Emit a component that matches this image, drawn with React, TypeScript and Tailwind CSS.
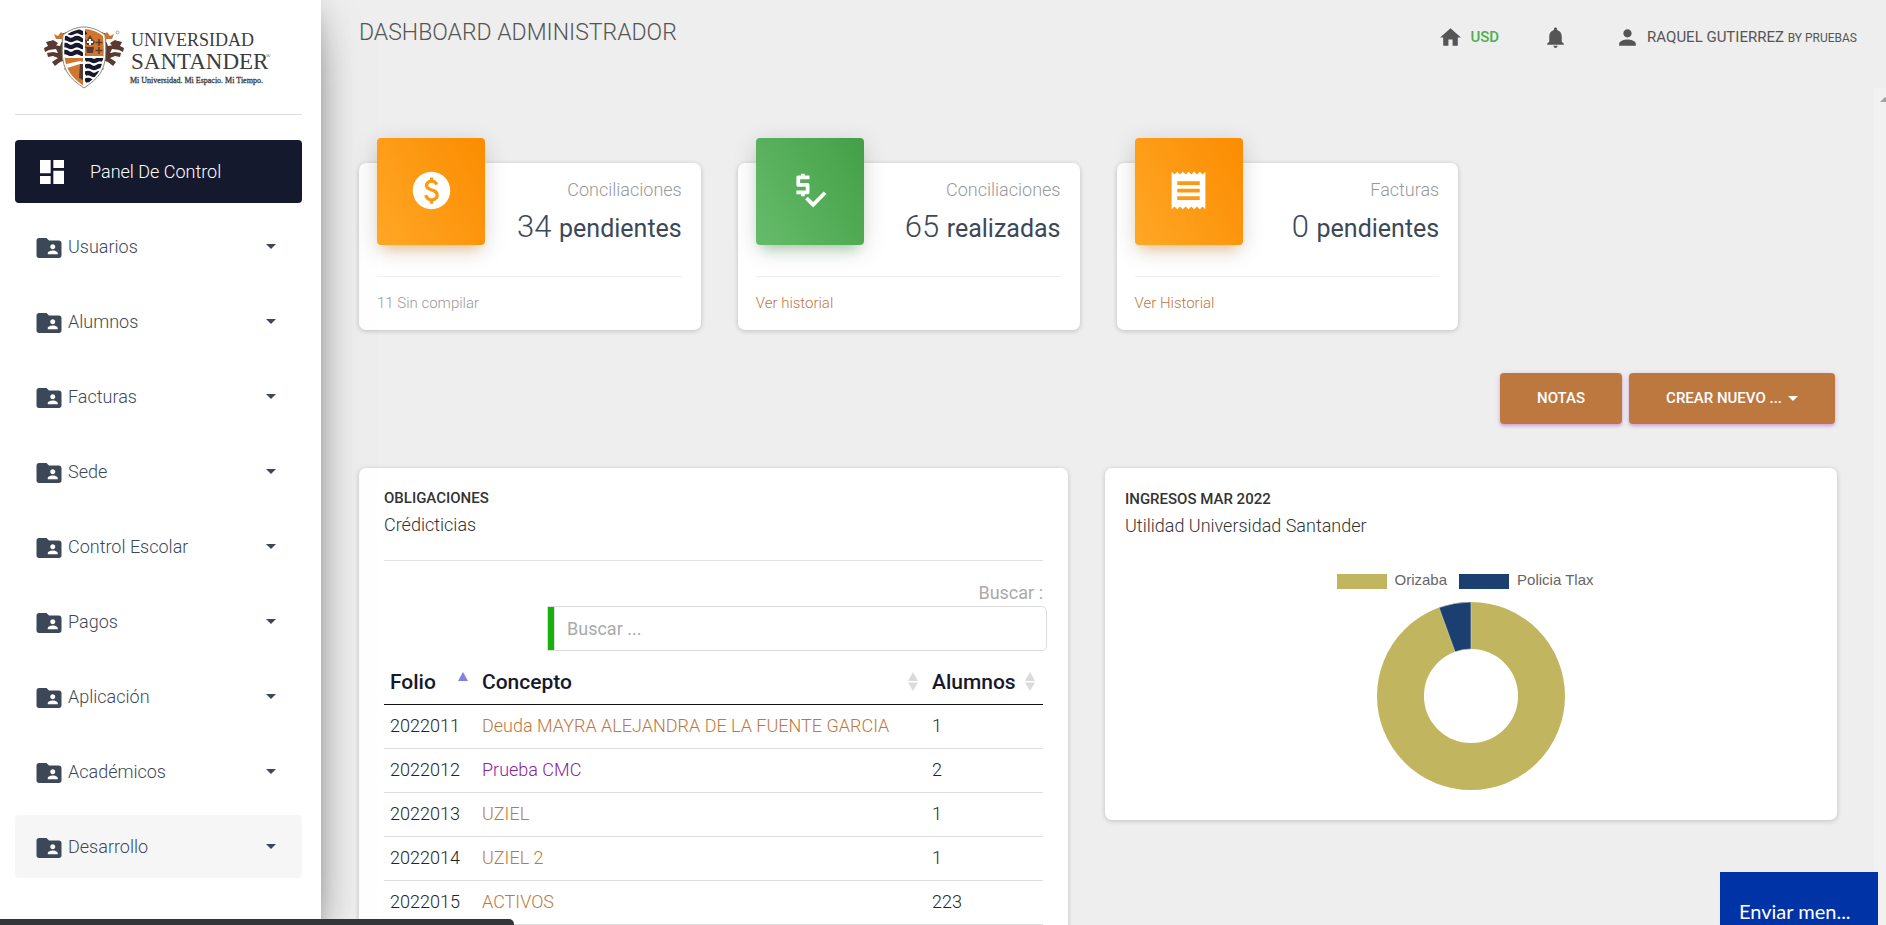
import type { ReactNode } from "react";
import {
  MdDashboard,
  MdFolderShared,
  MdHome,
  MdNotifications,
  MdPaid,
  MdPerson,
  MdPriceCheck,
  MdReceipt,
} from "react-icons/md";

const sections = [
  "Usuarios",
  "Alumnos",
  "Facturas",
  "Sede",
  "Control Escolar",
  "Pagos",
  "Aplicación",
  "Académicos",
  "Desarrollo",
];

const debts = [
  { folio: "2022011", name: "Deuda MAYRA ALEJANDRA DE LA FUENTE GARCIA", count: 1 },
  { folio: "2022012", name: "Prueba CMC", count: 2, visited: true },
  { folio: "2022013", name: "UZIEL", count: 1 },
  { folio: "2022014", name: "UZIEL 2", count: 1 },
  { folio: "2022015", name: "ACTIVOS", count: 223 },
];

const CARD = "rounded-[7px] bg-white shadow-[0_1px_5px_rgba(0,0,0,0.2)]";

function Caret() {
  return (
    <span className="inline-block border-x-[5px] border-t-[5px] border-x-transparent border-t-current" />
  );
}

function Lion() {
  return (
    <g fill="#5a3a30">
      <path d="M17 8 L23 6 L29 9 L31 17 L27 22 L30 30 L27 36 L31 44 L24 45 L20 43 L25 39 L22 34 L16 36 L11 40 L8 36 L14 32 L9 30 L4 31 L3 27 L9 26 L14 27 L12 23 L5 24 L1 26 L0 22 L4 20 L2 16 L6 15 L10 19 L16 20 L18 15 Z" />
      <path d="M4 16 L9 14 L14 17 L11 21 L5 19 Z" />
      <path d="M12 13 L10 8 L14 10 L17 6 L20 9 L26 7 L25 13 Z" fill="#c9742f" />
    </g>
  );
}

function Logo() {
  return (
    <svg viewBox="0 0 234 66" className="h-[66px] w-[234px]" role="img" aria-label="Universidad Santander">
      <Lion />
      <g transform="translate(80 0) scale(-1 1)">
        <Lion />
      </g>
      <path
        d="M40 1 C33 1 25 4 19 9 C18 24 17 35 23 46 C27 53 34 58 40 62 C46 58 53 53 57 46 C63 35 62 24 61 9 C55 4 47 1 40 1 Z"
        fill="#fff"
        stroke="#8b8b78"
      />
      <clipPath id="shield">
        <path d="M40 3 C33 3 26 6 21 10 C20 24 19 34 25 45 C28 51 34 56 40 60 C46 56 52 51 55 45 C61 34 60 24 59 10 C54 6 47 3 40 3 Z" />
      </clipPath>
      <g clipPath="url(#shield)">
        <path d="M40 0H62V31H40Z" fill="#d0772f" />
        <path d="M18 31H40V64H18Z" fill="#d0772f" />
        <g stroke="#16192e" strokeWidth="4.500" fill="none">
          <path d="M18 6 q3 -2 6 0 t6 0 t6 0 t6 0" />
          <path d="M18 13 q3 -2 6 0 t6 0 t6 0 t4 0" />
          <path d="M18 20 q3 -2 6 0 t6 0 t6 0 t4 0" />
          <path d="M18 27 q3 -2 6 0 t6 0 t6 0 t4 0" />
        </g>
        <g stroke="#16192e" strokeWidth="4.500" fill="none">
          <path d="M41 34 q3 -2 6 0 t6 0 t6 0" />
          <path d="M41 41 q3 -2 6 0 t6 0 t6 0" />
          <path d="M41 48 q3 -2 6 0 t6 0 t6 0" />
          <path d="M41 55 q3 -2 6 0 t6 0 t6 0" />
        </g>
        <path d="M39 0H41V64H39Z M18 30H62V32H18Z" fill="#fff" />
        <path d="M18 39 L36 35 L40 36 V38 L36 38 L20 43 Z" fill="#fff" />
        <path d="M36 38H39V54L35 52Z" fill="#5a3a30" />
        <path d="M43 14 L46 9 L49 14 L51 16 L49 19 H43 L41 16 Z M42 21H50L49 27H43Z" fill="#5a3a30" />
        <path d="M45 13H47V15H49V17H47V19H45V17H43V15H45Z" fill="#fff" />
        <path d="M55 13V20M51.500 16.500H58.500M55 21V28M51.500 24.500H58.500" stroke="#5a3a30" strokeWidth="1.500" />
      </g>
      <circle cx="73.500" cy="6.500" r="1.500" fill="none" stroke="#888" strokeWidth="0.700" />
      <g fontFamily="'Liberation Serif', serif" fill="#3c3c3c">
        <text x="87" y="20" fontSize="18">UNIVERSIDAD</text>
        <text x="87" y="43" fontSize="23">SANTANDER</text>
        <text x="222" y="32" fontSize="6">®</text>
        <text x="86" y="57" fontSize="8" stroke="#3c3c3c" strokeWidth="0.300">
          Mi Universidad. Mi Espacio. Mi Tiempo.
        </text>
      </g>
    </svg>
  );
}

function Sidebar() {
  return (
    <aside className="z-10 flex w-[321px] shrink-0 flex-col bg-white pr-[19px] pl-[15px] shadow-[0_20px_48px_-15px_rgba(0,0,0,0.56),0_5px_31px_0_rgba(0,0,0,0.12),0_10px_12px_-6px_rgba(0,0,0,0.2)]">
      <a href="#inicio" className="flex h-[115px] items-center border-b border-[#dedede] pt-1 pl-[29px]">
        <Logo />
      </a>
      <nav className="mt-[25px] flex flex-col gap-3">
        <a
          href="#panel"
          className="flex h-[63px] items-center rounded-[4px] bg-[#15192d] pl-[21px] text-[18px] font-light text-white"
        >
          <MdDashboard className="mr-[22px] size-8" />
          Panel De Control
        </a>
        {sections.map((name) => (
          <a
            key={name}
            href={"#" + name}
            className="flex h-[63px] items-center rounded-[4px] pr-[26px] pl-[19px] text-[18px] font-light text-[#3c4858] last:bg-[#f6f6f6]"
          >
            <MdFolderShared className="mt-0.5 mr-1 size-[30px]" />
            <span className="flex-1">{name}</span>
            <Caret />
          </a>
        ))}
      </nav>
    </aside>
  );
}

function TopBar() {
  return (
    <header className="flex h-[88px] shrink-0 justify-between pt-[15px] pr-[29px] pl-[38px] text-[#555]">
      <h1 className="text-[23px] leading-9 font-light">DASHBOARD ADMINISTRADOR</h1>
      <div className="flex h-11 items-center text-[15px]">
        <a href="#divisa" className="mr-[44px] flex items-center gap-[7px] font-medium text-[#4caf50]">
          <MdHome className="size-[25px] text-[#555]" />
          USD
        </a>
        <button type="button" aria-label="Notificaciones" className="mr-[47px]">
          <MdNotifications className="size-[25px]" />
        </button>
        <a href="#perfil" className="flex items-center gap-[7px]">
          <MdPerson className="size-[25px]" />
          <span>
            RAQUEL GUTIERREZ <small className="text-[12px]">BY PRUEBAS</small>
          </span>
        </a>
      </div>
    </header>
  );
}

const ORANGE =
  "bg-[linear-gradient(60deg,#ffa726,#fb8c00)] shadow-[0_5px_25px_0_rgba(0,0,0,0.14),0_9px_12px_-6px_rgba(255,152,0,0.4)]";
const GREEN =
  "bg-[linear-gradient(60deg,#66bb6a,#43a047)] shadow-[0_5px_25px_0_rgba(0,0,0,0.14),0_9px_12px_-6px_rgba(76,175,80,0.4)]";

type StatProps = {
  icon: ReactNode;
  tone: string;
  title: string;
  value: number;
  unit: string;
  footer: ReactNode;
};

function Stat({ icon, tone, title, value, unit, footer }: StatProps) {
  return (
    <article className={CARD + " pr-[19px] pl-[18px]"}>
      <div className="flex h-[113px] items-start justify-between">
        <div className={"-mt-[25px] grid h-[107px] w-[108px] place-items-center rounded-[4px] pb-0.5 text-white " + tone}>
          {icon}
        </div>
        <div className="pt-[13px] text-right font-light">
          <p className="text-[18px] leading-[27px] text-[#999]">{title}</p>
          <h3 className="mt-[3px] text-[31px] leading-[42px] text-[#3c4858]">
            {value} <small className="text-[25px] font-normal">{unit}</small>
          </h3>
        </div>
      </div>
      <div className="flex h-[54px] items-center border-t border-[#eee] text-[15px] font-light text-[#999]">
        {footer}
      </div>
    </article>
  );
}

const BUTTON =
  "flex h-[51px] items-center rounded-[4px] bg-[#bd783f] px-[37px] text-[15px] font-medium text-white shadow-[0_2px_3px_0_rgba(156,39,176,0.3),0_1px_6px_0_rgba(156,39,176,0.14)]";

function SortMark({ active = false }: { active?: boolean }) {
  return (
    <svg viewBox="0 0 10 19" className="h-[19px] w-[10px]" fill={active ? "#7f84e0" : "#dadada"} aria-hidden="true">
      <path d="M0 9 5 0 10 9Z" />
      {!active && <path d="M0 10.500 5 19 10 10.500Z" />}
    </svg>
  );
}

function Debts() {
  return (
    <section className={CARD + " px-[25px] pb-6"}>
      <h4 className="pt-[18px] text-[15px] leading-6 font-medium text-[#333]">OBLIGACIONES</h4>
      <p className="mt-px text-[18px] leading-[27px] font-light text-[#333]">Crédicticias</p>
      <hr className="mt-[22px] border-[#e0e0e0]" />
      <div className="flex flex-col items-end pt-[19px] text-[18px]">
        <label htmlFor="buscar" className="leading-[26px] text-[#aaa]">
          Buscar :
        </label>
        <div className="-mr-1 flex h-[45px] w-[500px] max-w-full rounded-r-[5px] border border-[#ddd]">
          <span className="w-[6px] bg-[#16b10c]" />
          <input
            id="buscar"
            type="search"
            placeholder="Buscar ..."
            className="min-w-0 flex-1 border-l border-[#ddd] px-3 outline-none placeholder:text-[#aaa]"
          />
        </div>
      </div>
      <table className="mt-[9px] w-full table-fixed text-left">
        <thead>
          <tr className="h-11 border-b border-[#111] text-[21px] leading-7 text-[#15192d]">
            <th className="w-[92px] pr-2 pl-[6px] font-medium">
              <span className="flex items-center justify-between">
                Folio <SortMark active />
              </span>
            </th>
            <th className="pr-2 pl-[6px] font-medium">
              <span className="flex items-center justify-between">
                Concepto <SortMark />
              </span>
            </th>
            <th className="w-[117px] pr-2 pl-[6px] font-medium">
              <span className="flex items-center justify-between">
                Alumnos <SortMark />
              </span>
            </th>
          </tr>
        </thead>
        <tbody>
          {debts.map((debt) => (
            <tr key={debt.folio} className="h-11 border-b border-[#dcdcdc] text-[18px] font-light text-[#212529]">
              <td className="px-[6px] pb-0.5">{debt.folio}</td>
              <td className="px-[6px] pb-0.5">
                <a href={"#" + debt.folio} className={debt.visited ? "text-[#89229b]" : "text-[#bd783f]"}>
                  {debt.name}
                </a>
              </td>
              <td className="px-[6px] pb-0.5">{debt.count}</td>
            </tr>
          ))}
        </tbody>
      </table>
    </section>
  );
}

function Income() {
  return (
    <section className={CARD + " h-[352px] px-5"}>
      <h4 className="pt-[19px] text-[15px] leading-6 font-medium text-[#333]">INGRESOS MAR 2022</h4>
      <p className="mt-px text-[18px] leading-[27px] font-light text-[#333]">Utilidad Universidad Santander</p>
      <div className="mt-[31px] flex flex-col items-center font-['Liberation_Sans',Arial,sans-serif] text-[15px] leading-5 text-[#666]">
        <ul className="flex gap-3 pr-3">
          <li className="flex items-center gap-2">
            <span className="mt-0.5 h-[15px] w-[50px] bg-[#c2b55f]" />
            Orizaba
          </li>
          <li className="flex items-center gap-2">
            <span className="mt-0.5 h-[15px] w-[50px] bg-[#1c3f72]" />
            Policia Tlax
          </li>
        </ul>
        <svg viewBox="-94 -94 188 188" className="mt-3 size-[188px]" role="img" aria-label="Ingresos">
          <circle r="70.500" fill="none" stroke="#c2b55f" strokeWidth="47" />
          <path
            d="M0 -94 A94 94 0 0 0 -32 -88.400 L-16 -44.200 A47 47 0 0 1 0 -47 Z"
            fill="#1c3f72"
            stroke="#d9d6c0"
            strokeWidth="0.600"
          />
        </svg>
      </div>
    </section>
  );
}

export default function App() {
  return (
    <div className="relative flex h-screen overflow-hidden bg-[#eee] font-[Roboto,sans-serif]">
      <Sidebar />
      <div className="flex min-w-0 flex-1 flex-col">
        <TopBar />
        <div className="flex min-h-0 flex-1">
          <main className="min-w-0 flex-1 overflow-hidden pt-[75px] pr-[37px] pl-[38px]">
            <div className="grid grid-cols-4 gap-[37px]">
              <Stat
                icon={<MdPaid className="size-[45px]" />}
                tone={ORANGE}
                title="Conciliaciones"
                value={34}
                unit="pendientes"
                footer={<span>11 Sin compilar</span>}
              />
              <Stat
                icon={<MdPriceCheck className="size-[45px]" />}
                tone={GREEN}
                title="Conciliaciones"
                value={65}
                unit="realizadas"
                footer={<a href="#conciliaciones" className="text-[#bd783f]">Ver historial</a>}
              />
              <Stat
                icon={<MdReceipt className="size-[45px]" />}
                tone={ORANGE}
                title="Facturas"
                value={0}
                unit="pendientes"
                footer={<a href="#facturas" className="text-[#bd783f]">Ver Historial</a>}
              />
            </div>
            <div className="mt-[43px] mr-[2px] flex justify-end gap-[7px]">
              <button type="button" className={BUTTON}>NOTAS</button>
              <button type="button" className={BUTTON + " gap-[6px]"}>
                CREAR NUEVO ... <Caret />
              </button>
            </div>
            <div className="mt-11 grid grid-cols-[709fr_732fr] items-start gap-[37px]">
              <Debts />
              <Income />
            </div>
          </main>
          <div className="w-3 shrink-0 overflow-hidden bg-[#f1f1f1] pt-[9px] pl-[6px]" aria-hidden="true">
            <span className="block h-0 w-0 border-x-[5px] border-b-[5px] border-x-transparent border-b-[#a3a3a3]" />
          </div>
        </div>
      </div>
      <div className="absolute bottom-0 left-0 z-20 h-[6px] w-[514px] rounded-tr-[5px] bg-[#323539]" />
      <button
        type="button"
        className="absolute right-2 bottom-0 z-20 h-[53px] w-[158px] bg-[#0033a5] pt-6 pl-[19px] text-left font-[Lato,sans-serif] text-[20px] leading-7 text-white"
      >
        Enviar men...
      </button>
    </div>
  );
}
